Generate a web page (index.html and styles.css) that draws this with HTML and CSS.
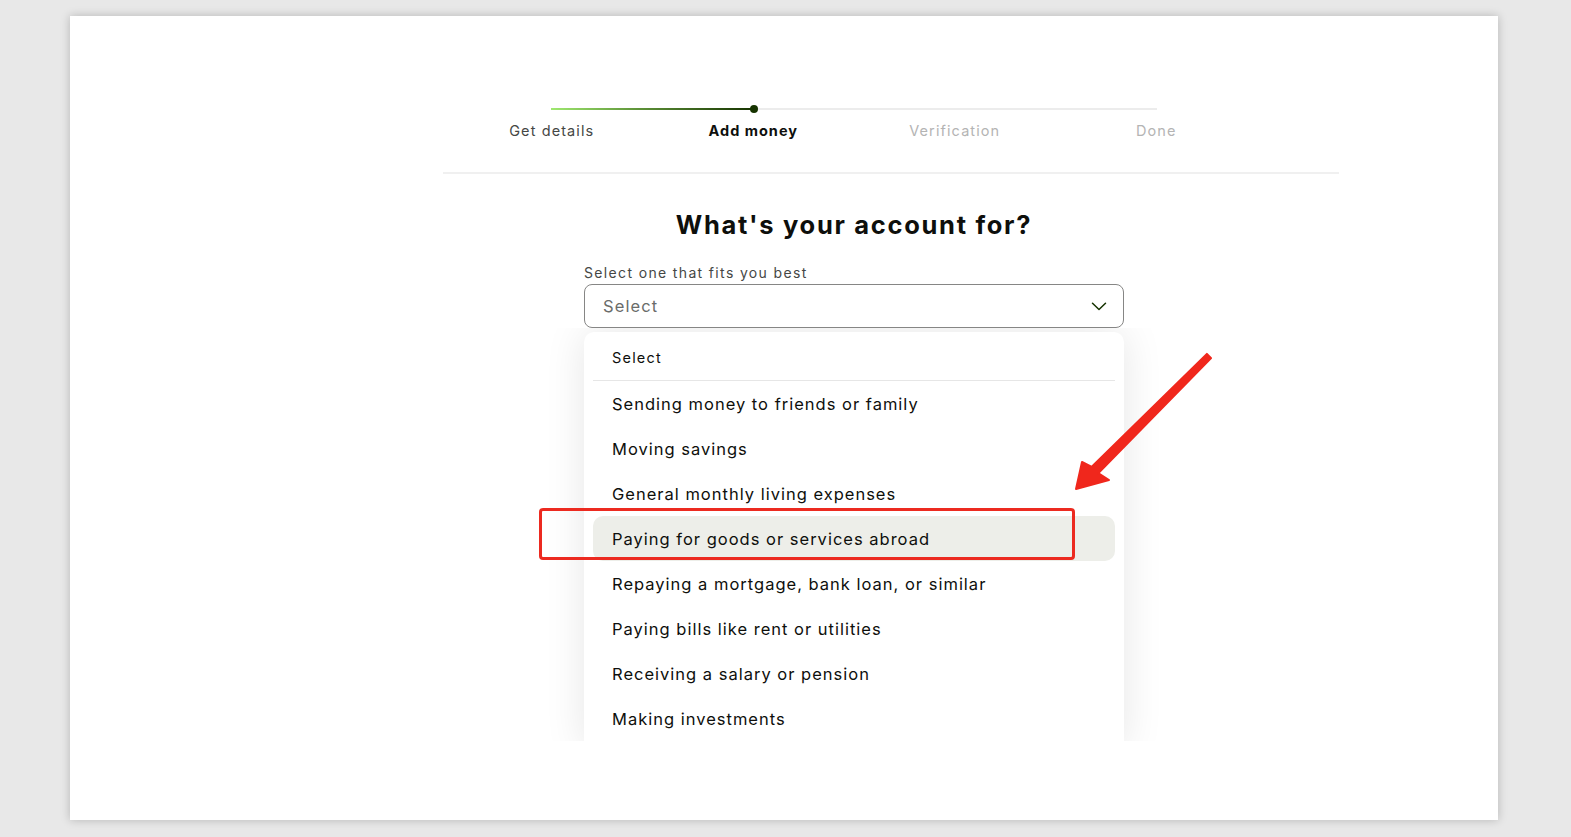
FILE: index.html
```html
<!DOCTYPE html>
<html lang="en">
<head>
<meta charset="utf-8">
<title>What's your account for?</title>
<link rel="stylesheet" href="styles.css">
</head>
<body>
<div class="page">
  <div class="stepper">
    <div class="track"><div class="fill"></div><div class="dot"></div></div>
    <div class="labels">
      <span class="step done">Get details</span>
      <span class="step current">Add money</span>
      <span class="step todo">Verification</span>
      <span class="step todo">Done</span>
    </div>
  </div>
  <div class="divider"></div>
  <div class="form">
    <h1 class="title">What's your account for?</h1>
    <div class="field-label">Select one that fits you best</div>
    <div class="select">
      <span class="select-value">Select</span>
      <svg class="chevron" width="16" height="9" viewBox="0 0 16 9"><path d="M1.5 1.2 8 7.5l6.5-6.3" fill="none" stroke="#163300" stroke-width="1.5" stroke-linecap="round" stroke-linejoin="round"/></svg>
    </div>
    <div class="menu-clip">
      <div class="menu">
        <div class="menu-head">Select</div>
        <div class="item">Sending money to friends or family</div>
        <div class="item">Moving savings</div>
        <div class="item">General monthly living expenses</div>
        <div class="item active">Paying for goods or services abroad</div>
        <div class="item">Repaying a mortgage, bank loan, or similar</div>
        <div class="item">Paying bills like rent or utilities</div>
        <div class="item">Receiving a salary or pension</div>
        <div class="item">Making investments</div>
      </div>
    </div>
  </div>
  <div class="highlight-box"></div>
  <svg class="arrow" width="1428" height="804" viewBox="70 16 1428 804">
    <polygon points="1206.9,353.9 1091.8,466.8 1082,462 1076,489 1109,480 1098.2,473.2 1211.1,358.1" fill="#f0271c" stroke="#f0271c" stroke-width="2" stroke-linejoin="round"/>
  </svg>
</div>
</body>
</html>
```
FILE: styles.css
```css
html, body {
  margin: 0;
  padding: 0;
}
body {
  background: #e8e8e8;
  width: 1571px;
  height: 837px;
  overflow: hidden;
  font-family: Inter, "Noto Sans", "Liberation Sans", sans-serif;
  color: #0e0f0c;
}
.page {
  position: relative;
  margin: 16px 0 0 70px;
  width: 1428px;
  height: 804px;
  background: #fff;
  box-shadow: 0 0 9px rgba(0, 0, 0, 0.22);
}
.stepper {
  margin-left: 381px;
  width: 806px;
  padding-top: 89px;
}
.track {
  margin: 0 100px;
  height: 8px;
  display: flex;
  align-items: center;
  background: linear-gradient(#ececec, #ececec) center / 100% 2px no-repeat;
}
.fill {
  width: 203px;
  height: 2px;
  background: linear-gradient(90deg, #9fe870 0%, #5b8f36 45%, #163300 100%);
}
.dot {
  width: 8px;
  height: 8px;
  margin-left: -4px;
  border-radius: 50%;
  background: #163300;
}
.labels {
  display: grid;
  grid-template-columns: repeat(4, 1fr);
  margin-top: 8px;
}
.step {
  text-align: center;
  font-size: 14.5px;
  line-height: 20px;
  letter-spacing: 1.1px;
}
.step.done { color: #454745; }
.step.current { color: #0e0f0c; font-weight: 700; letter-spacing: 1px; }
.step.todo { color: #b4b4b4; }
.divider {
  margin: 31px 0 0 373px;
  width: 896px;
  height: 2px;
  background: #f0f0f0;
}
.form {
  margin-left: 514px;
  width: 540px;
}
.title {
  margin: 35px 0 0;
  text-align: center;
  font-size: 25.5px;
  line-height: 32px;
  font-weight: 700;
  letter-spacing: 1.7px;
}
.field-label {
  margin-top: 23px;
  font-size: 14px;
  line-height: 18px;
  color: #454745;
  letter-spacing: 1.35px;
}
.select {
  margin-top: 2px;
  height: 42px;
  border: 1px solid #868685;
  border-radius: 8px;
  display: flex;
  align-items: center;
  justify-content: space-between;
  padding: 0 16px 0 18px;
}
.select-value {
  font-size: 16.5px;
  color: #6a6c6a;
  letter-spacing: 1.1px;
}
.menu-clip {
  margin: 0 -50px;
  padding: 4px 50px 0;
  height: 409px;
  overflow: hidden;
}
.menu {
  background: #fff;
  border-radius: 10px;
  box-shadow: 0 0 40px rgba(0, 0, 0, 0.1);
  padding: 8px 9px 9px;
}
.menu-head {
  padding: 8px 19px 12px;
  font-size: 14.5px;
  line-height: 20px;
  letter-spacing: 1.2px;
  border-bottom: 1px solid #e6e6e6;
}
.item {
  height: 45px;
  display: flex;
  align-items: center;
  padding-left: 19px;
  font-size: 16.5px;
  letter-spacing: 1px;
  border-radius: 10px;
}
.item.active {
  background: #edeee9;
}
.highlight-box {
  position: absolute;
  left: 469px;
  top: 492px;
  width: 530px;
  height: 46px;
  border: 3px solid #ec2a20;
  border-radius: 4px;
}
.arrow {
  position: absolute;
  left: 0;
  top: 0;
  pointer-events: none;
}
```
